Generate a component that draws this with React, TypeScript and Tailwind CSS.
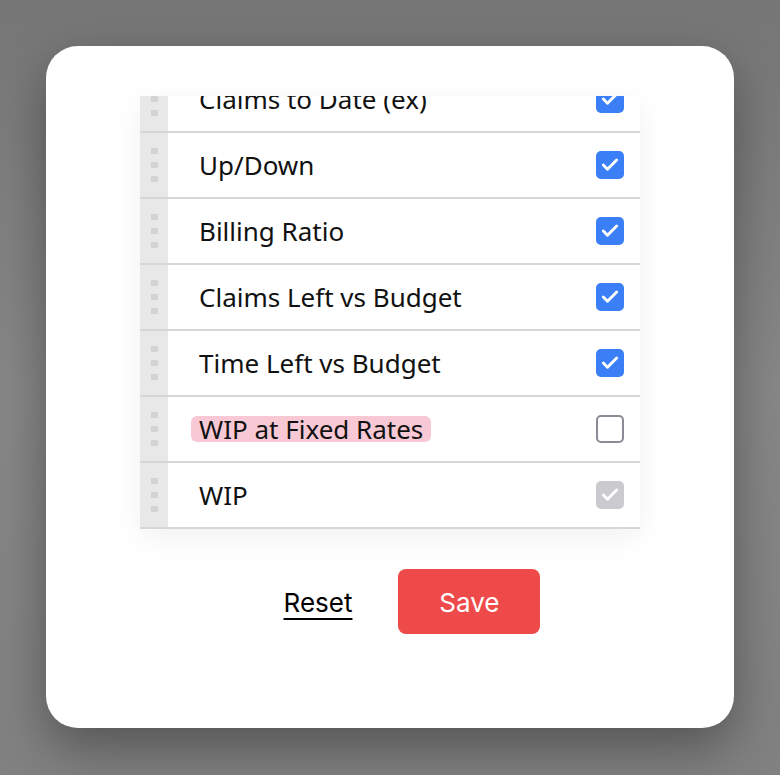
import { Check } from 'lucide-react'

const columns = [
  { label: 'Claims to Date (ex)', state: 'on' },
  { label: 'Up/Down', state: 'on' },
  { label: 'Billing Ratio', state: 'on' },
  { label: 'Claims Left vs Budget', state: 'on' },
  { label: 'Time Left vs Budget', state: 'on' },
  { label: 'WIP at Fixed Rates', state: 'off', highlight: true },
  { label: 'WIP', state: 'locked' },
]

function Box({ state }: { state: string }) {
  if (state === 'off') {
    return <div className="w-[28px] h-[28px] rounded-[5px] border-2 border-[#8c8a96] bg-white" />
  }
  return (
    <div
      className={`w-[28px] h-[28px] rounded-[5px] flex items-center justify-center ${
        state === 'on' ? 'bg-[#3a7ff6]' : 'bg-[#cbcbcf]'
      }`}
    >
      <Check className="w-[20px] h-[20px] text-white" strokeWidth={3.5} />
    </div>
  )
}

export default function App() {
  return (
    <div className="w-[780px] h-[775px] bg-[#838383] bg-gradient-to-b from-[#767676] via-[#878787] to-[#818181] pt-[46px] px-[46px] font-['Noto_Sans',sans-serif]">
      <div className="w-[688px] h-[682px] bg-white rounded-[32px] shadow-[0_20px_50px_rgba(0,0,0,0.35)] pt-[50px] flex flex-col items-center">
        <div className="w-[500px] h-[433px] overflow-hidden shadow-[0_8px_30px_rgba(0,0,0,0.06)]">
          <div className="-mt-[29px]">
            {columns.map((c) => (
              <div key={c.label} className="flex h-[66px] border-b-2 border-[#d6d6d6]">
                <div className="w-[28px] bg-[#e8e8e8] flex flex-col items-center justify-center gap-[8px]">
                  <div className="w-[7px] h-[6px] bg-[#d2d2d2]" />
                  <div className="w-[7px] h-[6px] bg-[#d2d2d2]" />
                  <div className="w-[7px] h-[6px] bg-[#d2d2d2]" />
                </div>
                <div className="flex-1 flex items-center justify-between pl-[31px] pr-[16px]">
                  <span
                    className={`text-[26px] leading-[26px] text-[#111] ${
                      c.highlight ? 'bg-[#f8c9d5] rounded-[6px] px-[8px] -ml-[8px]' : ''
                    }`}
                  >
                    {c.label}
                  </span>
                  <Box state={c.state} />
                </div>
              </div>
            ))}
          </div>
        </div>
        <div className="flex items-center gap-[46px] mt-[40px] pl-[44px] font-['Inter',sans-serif]">
          <button className="text-[26px] text-black underline underline-offset-[6px] decoration-2 mt-[2px]">Reset</button>
          <button className="w-[142px] h-[65px] rounded-[8px] bg-[#ee4a4a] text-white text-[26px] pt-[2px]">Save</button>
        </div>
      </div>
    </div>
  )
}
